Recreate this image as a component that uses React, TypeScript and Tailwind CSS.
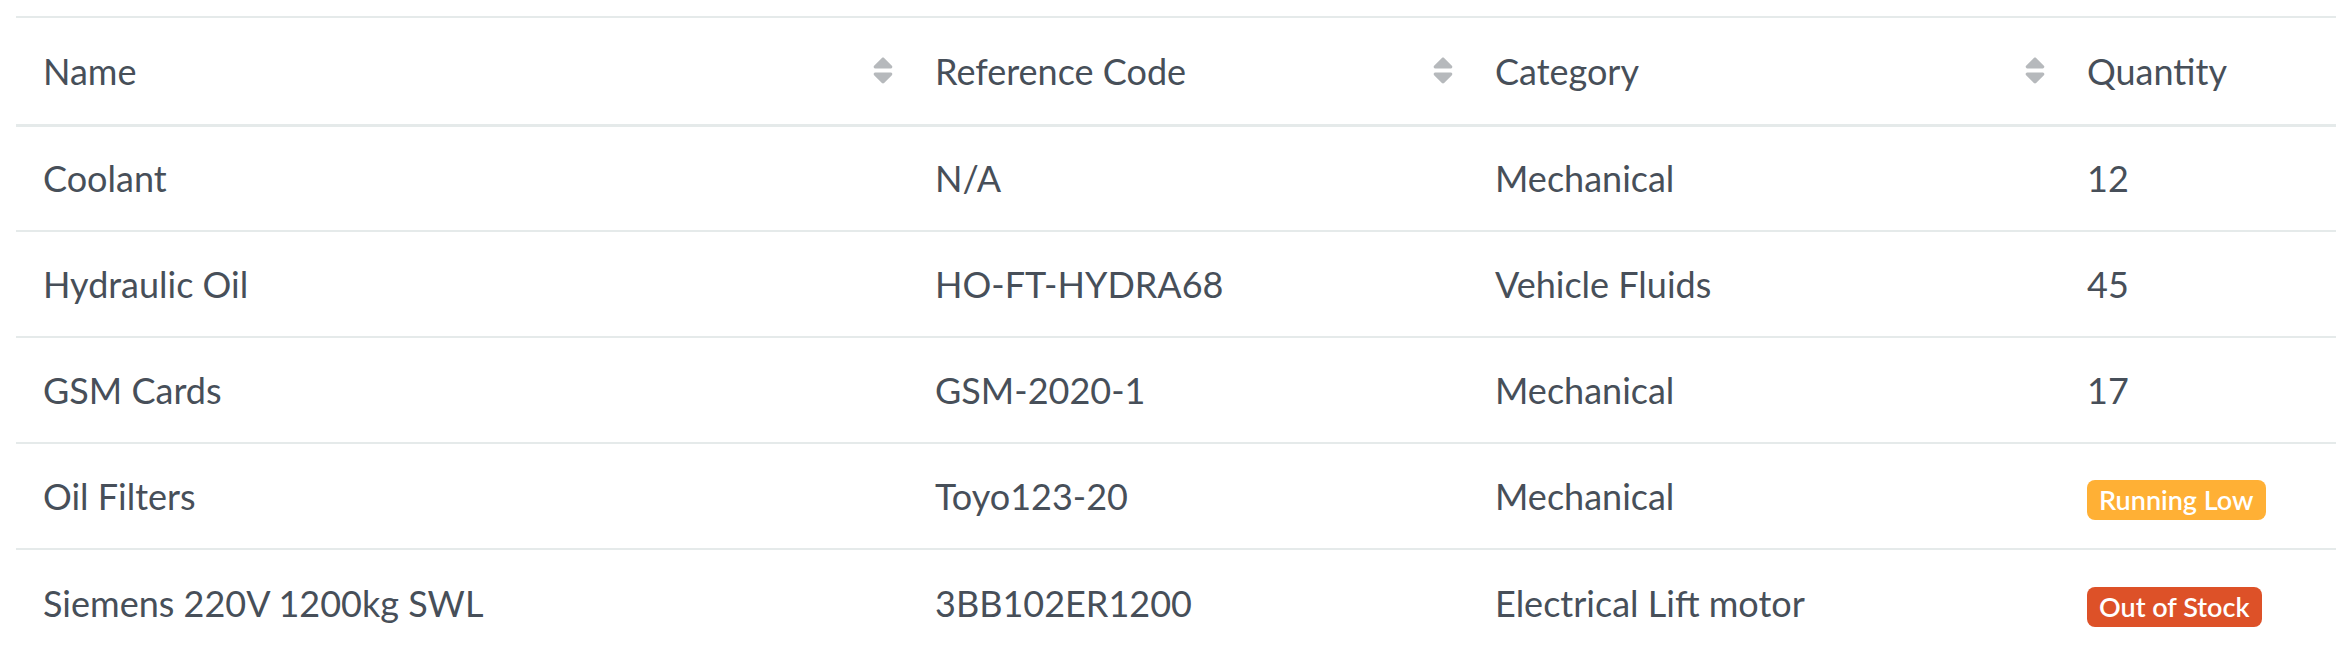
import React from 'react'

type Status = 'low' | 'out' | null

interface Item {
  name: string
  code: string
  category: string
  quantity: number
  status: Status
}

const items: Item[] = [
  { name: 'Coolant', code: 'N/A', category: 'Mechanical', quantity: 12, status: null },
  { name: 'Hydraulic Oil', code: 'HO-FT-HYDRA68', category: 'Vehicle Fluids', quantity: 45, status: null },
  { name: 'GSM Cards', code: 'GSM-2020-1', category: 'Mechanical', quantity: 17, status: null },
  { name: 'Oil Filters', code: 'Toyo123-20', category: 'Mechanical', quantity: 3, status: 'low' },
  { name: 'Siemens 220V 1200kg SWL', code: '3BB102ER1200', category: 'Electrical Lift motor', quantity: 0, status: 'out' },
]

const SortIcon = () => (
  <svg viewBox="7 57 306 398" width="20" height="27" className="shrink-0 fill-[#b6b9bc]">
    <path d="M41 288h238c21.4 0 32.1 25.9 17 41L177 448c-9.4 9.4-24.6 9.4-33.9 0L24 329c-15.1-15.1-4.4-41 17-41zm255-105L177 64c-9.4-9.4-24.6-9.4-33.9 0L24 183c-15.1 15.1-4.4 41 17 41h238c21.4 0 32.1-25.9 17-41z" />
  </svg>
)

const Badge = ({ status }: { status: Status }) => {
  if (status === 'low') {
    return (
      <span className="inline-flex h-[40px] items-center rounded-[8px] bg-[#ffb035] px-[12px] text-[27px] font-semibold text-white">
        Running Low
      </span>
    )
  }
  return (
    <span className="inline-flex h-[40px] items-center rounded-[8px] bg-[#dd5128] px-[12px] text-[27px] font-semibold text-white">
      Out of Stock
    </span>
  )
}

const headers = [
  { label: 'Name', sort: true },
  { label: 'Reference Code', sort: true },
  { label: 'Category', sort: true },
  { label: 'Quantity', sort: false },
]

export default function App() {
  return (
    <div className="min-h-[654px] w-[2336px] overflow-hidden bg-white pt-[16px] pl-[16px] font-['Lato',sans-serif] text-[#474f59]">
      <table className="w-[2320px] table-fixed border-collapse">
        <colgroup>
          <col className="w-[892px]" />
          <col className="w-[560px]" />
          <col className="w-[592px]" />
          <col className="w-[276px]" />
        </colgroup>
        <thead>
          <tr className="border-t-2 border-b-[3px] border-[#e5eaea]">
            {headers.map((h) => (
              <th key={h.label} className="h-[108px] p-0 text-left text-[36px] font-normal">
                <div className="flex items-center justify-between pr-[15px] pl-[27px]">
                  <span>{h.label}</span>
                  {h.sort && <SortIcon />}
                </div>
              </th>
            ))}
          </tr>
        </thead>
        <tbody>
          {items.map((item) => (
            <tr key={item.name} className="border-b-2 border-[#e5eaea] text-[36px] last:border-b-0">
              <td className="h-[106px] pl-[27px]">{item.name}</td>
              <td className="h-[106px] pl-[27px]">{item.code}</td>
              <td className="h-[106px] pl-[27px]">{item.category}</td>
              <td className="h-[106px] pl-[27px]">
                {item.status ? <Badge status={item.status} /> : item.quantity}
              </td>
            </tr>
          ))}
        </tbody>
      </table>
    </div>
  )
}
